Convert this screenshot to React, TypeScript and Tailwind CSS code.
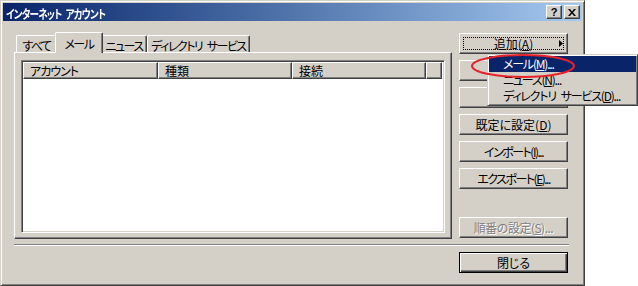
import React from "react";

const raised =
  "border border-t-white border-l-white border-r-[#404040] border-b-[#404040] shadow-[inset_-1px_-1px_#808080]";
const font = "font-['MS_UI_Gothic','Noto_Sans_CJK_JP',sans-serif] [font-feature-settings:'palt']";
const sp = "\u2002";

function Btn({ children, className = "", disabled = false }: { children?: React.ReactNode; className?: string; disabled?: boolean }) {
  return (
    <div
      className={`${raised} h-[21px] w-[109px] flex items-center justify-center text-[12px] leading-none ${
        disabled ? "text-[#808080] [text-shadow:1px_1px_#ffffff]" : "text-black"
      } ${className}`}
    >
      {children}
    </div>
  );
}

function Tab({ label, selected = false, width }: { label: string; selected?: boolean; width: string }) {
  if (selected) {
    return (
      <div
        className={`${width} relative z-10 -mx-[2px] h-[21px] -mb-[1px] bg-[#d4d0c8] border-l border-t border-l-white border-t-white border-r border-r-[#404040] shadow-[inset_-1px_0_#808080] rounded-t-[2px] flex items-start justify-center pt-[2px] text-[12px] tracking-[-1.5px]`}
      >
        {label}
      </div>
    );
  }
  return (
    <div
      className={`${width} mt-[2px] h-[17px] bg-[#d4d0c8] border-l border-t border-l-white border-t-white border-r border-r-[#404040] shadow-[inset_-1px_0_#808080] rounded-t-[2px] flex items-start justify-center pt-[1px] text-[12px] tracking-[-1.5px]`}
    >
      {label}
    </div>
  );
}

export default function App() {
  return (
    <div className={`relative w-[638px] h-[286px] bg-white ${font} overflow-hidden whitespace-nowrap`}>
      {/* window */}
      <div className="w-[585px] h-[286px] bg-[#d4d0c8] border border-t-[#d4d0c8] border-l-[#d4d0c8] border-r-[#404040] border-b-[#404040] shadow-[inset_1px_1px_#ffffff,inset_-1px_-1px_#808080] p-[2px]">
        {/* title bar */}
        <div className="h-[18px] bg-gradient-to-r from-[#0a246a] to-[#a6caf0] flex items-center pl-[3px] pr-[2px]">
          <div className="flex-1">
            <span className="inline-block text-white font-bold text-[12px] leading-none tracking-[-1px] scale-x-[0.8] origin-left">
              インターネット{sp}アカウント
            </span>
          </div>
          <div className={`${raised} bg-[#d4d0c8] w-[16px] h-[14px] flex items-center justify-center text-[11px] font-bold leading-none font-['Liberation_Sans',sans-serif]`}>?</div>
          <div className={`${raised} bg-[#d4d0c8] w-[16px] h-[14px] ml-[2px] flex items-center justify-center`}>
            <svg width="8" height="7" viewBox="0 0 8 7">
              <path d="M0 0h2l2 2.5L6 0h2L5 3.5 8 7H6L4 4.5 2 7H0l3-3.5z" fill="#000" />
            </svg>
          </div>
        </div>
        {/* body */}
        <div className="flex pl-[11px] pt-[12px]">
          <div className="w-[438px]">
            <div className="flex pl-[2px] h-[19px] items-end">
              <Tab label="すべて" width="w-[41px]" />
              <Tab label="メール" width="w-[48px]" selected />
              <Tab label="ニュース" width="w-[46px]" />
              <Tab label={`ディレクトリ${sp}サービス`} width="w-[103px]" />
            </div>
            <div className="h-[187px] border-l border-t border-l-white border-t-white border-r border-b border-r-[#404040] border-b-[#404040] shadow-[inset_-1px_-1px_#808080] pl-[6px] pt-[7px] pr-[6px]">
              <div className="h-[173px] border border-t-[#808080] border-l-[#808080] border-r-white border-b-white shadow-[inset_1px_1px_#404040,inset_-1px_-1px_#d4d0c8] p-[2px] bg-white">
                <div className="flex h-[17px] -mt-[1px] -ml-[1px] text-[12px]">
                  <div className={`${raised} bg-[#d4d0c8] w-[135px] flex items-center pl-[6px] tracking-[-1px]`}>アカウント</div>
                  <div className={`${raised} bg-[#d4d0c8] w-[134px] flex items-center pl-[6px]`}>種類</div>
                  <div className={`${raised} bg-[#d4d0c8] w-[134px] flex items-center pl-[6px]`}>接続</div>
                  <div className={`${raised} bg-[#d4d0c8] flex-1`} />
                </div>
              </div>
            </div>
          </div>
          <div className="ml-[7px] flex flex-col gap-[6px] pt-[0px]">
            <Btn className="relative">
              <div className="absolute inset-[3px] border border-dotted border-black" />
              <span>
                追加(<span className="underline">A</span>)
              </span>
              <svg className="absolute right-[4px] top-[6px]" width="4" height="7" viewBox="0 0 4 7">
                <path d="M0 0L4 3.5L0 7z" fill="#000" />
              </svg>
            </Btn>
            <Btn />
            <Btn />
            <Btn>
              既定に設定(<span className="underline">D</span>)
            </Btn>
            <Btn className="tracking-[-1.5px]">
              インポート(<span className="underline">I</span>)...
            </Btn>
            <Btn className="tracking-[-1.5px]">
              エクスポート(<span className="underline">E</span>)...
            </Btn>
            <Btn disabled className="mt-[22px] tracking-[-0.5px]">
              順番の設定(<span className="underline">S</span>)...
            </Btn>
          </div>
        </div>
        <div className="ml-[11px] mt-[5px] w-[555px] border-t border-t-[#808080] border-b border-b-white" />
        <div className="flex justify-end pr-[14px] mt-[6px]">
          <div className="w-[109px] h-[21px] border border-black shadow-[inset_1px_1px_#ffffff,inset_-1px_-1px_#404040,inset_-2px_-2px_#808080] flex items-center justify-center text-[12px] leading-none">
            閉じる
          </div>
        </div>
      </div>

      {/* popup menu */}
      <div className="absolute left-[487px] top-[54px] w-[151px] bg-[#d4d0c8] border border-t-[#d4d0c8] border-l-[#d4d0c8] border-r-[#404040] border-b-[#404040] shadow-[inset_1px_1px_#ffffff,inset_-1px_-1px_#808080] p-[1px] text-[12px] tracking-[-1.2px]">
        <div className="h-[16px] bg-[#0a246a] text-white flex items-center pl-[14px]">
          メール(<span className="underline">M</span>)...
        </div>
        <div className="h-[16px] flex items-center pl-[14px]">
          ニュース(<span className="underline">N</span>)...
        </div>
        <div className="h-[16px] flex items-center pl-[14px]">
          ディレクトリ{sp}サービス(<span className="underline">D</span>)...
        </div>
      </div>
      <svg className="absolute left-0 top-0 pointer-events-none" width="638" height="286">
        <ellipse cx="523" cy="66" rx="51" ry="11" fill="none" stroke="#e8222a" strokeWidth="2" />
      </svg>
    </div>
  );
}
